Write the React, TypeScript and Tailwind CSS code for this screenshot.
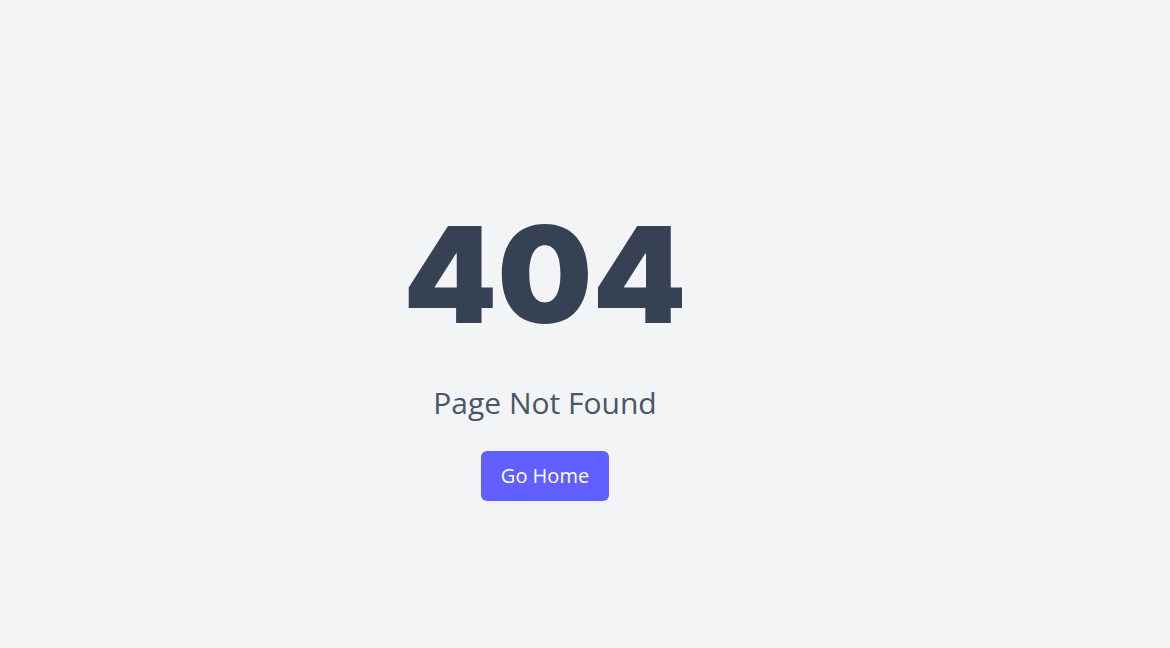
export default function App() {
  return (
    <div className="min-h-screen w-full bg-gray-100 flex items-center justify-center pr-[80px] pt-[60px]">
      <div className="flex flex-col items-center">
        <h1 className="text-[134px] leading-none font-black text-gray-700 font-['Inter']">404</h1>
        <p className="mt-[44px] text-3xl text-gray-600 font-['Open_Sans']">Page Not Found</p>
        <button className="mt-[30px] px-5 py-[11px] rounded-md bg-indigo-500 text-white text-xl font-['Open_Sans']">
          Go Home
        </button>
      </div>
    </div>
  );
}
